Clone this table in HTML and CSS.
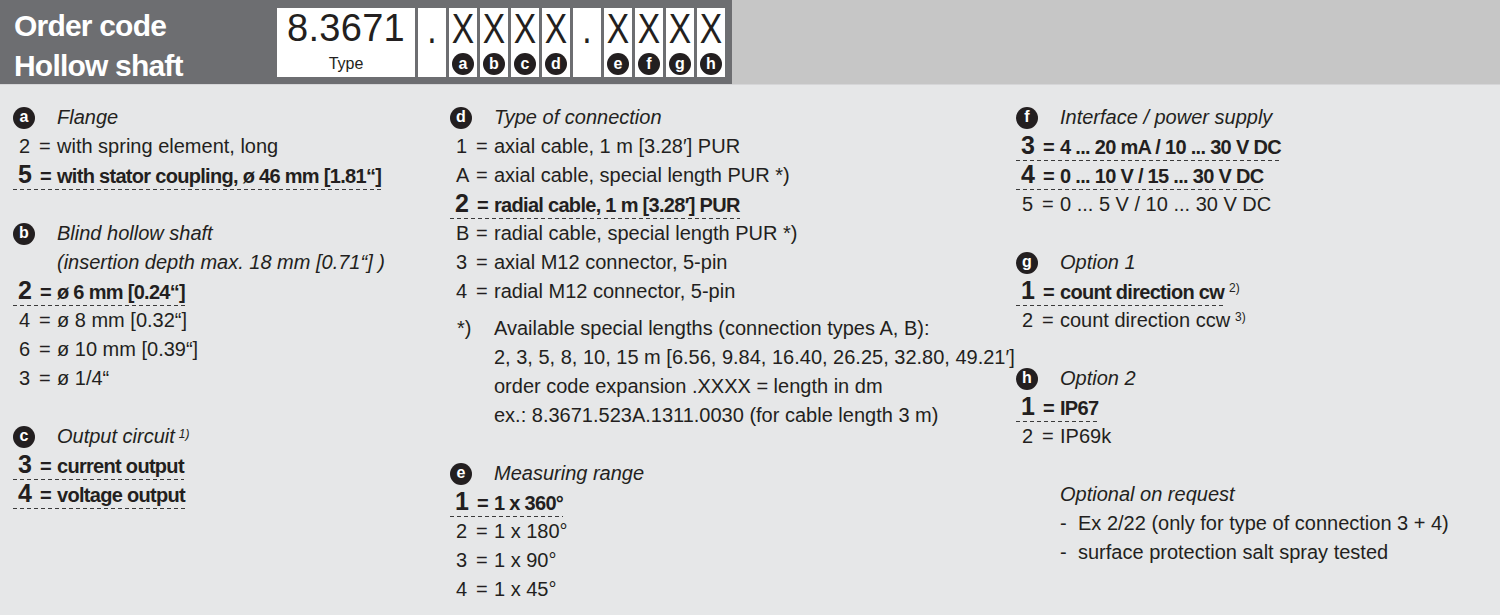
FILE: index.html
```html
<!DOCTYPE html>
<html lang="en">
<head>
<meta charset="utf-8">
<title>Order code – Hollow shaft</title>
<link rel="stylesheet" href="styles.css">
</head>
<body>
<div class="page">
  <header class="band">
    <div class="band-dark">
      <h1 class="title">Order code<br>Hollow shaft</h1>
      <div class="code">
        <div class="box type"><div class="type-num">8.3671</div><div class="type-label">Type</div></div>
        <div class="box slot"><span class="x">.</span></div>
        <div class="box slot"><span class="x">X</span><span class="badge">a</span></div>
        <div class="box slot"><span class="x">X</span><span class="badge">b</span></div>
        <div class="box slot"><span class="x">X</span><span class="badge">c</span></div>
        <div class="box slot"><span class="x">X</span><span class="badge">d</span></div>
        <div class="box slot"><span class="x">.</span></div>
        <div class="box slot"><span class="x">X</span><span class="badge">e</span></div>
        <div class="box slot"><span class="x">X</span><span class="badge">f</span></div>
        <div class="box slot"><span class="x">X</span><span class="badge">g</span></div>
        <div class="box slot"><span class="x">X</span><span class="badge">h</span></div>
      </div>
    </div>
    <div class="band-light"></div>
  </header>

  <main class="cols">
    <section class="col">
      <div class="group">
        <div class="head"><span class="badge">a</span><span class="head-text">Flange</span></div>
        <div class="row"><span class="n">2</span><span class="eq">=</span><span class="t">with spring element, long</span></div>
        <div class="row"><span class="std"><span class="n">5</span><span class="eq">=</span><span class="t">with stator coupling, ø 46 mm [1.81“]</span></span></div>
      </div>
      <div class="group">
        <div class="head"><span class="badge">b</span><span class="head-text">Blind hollow shaft</span></div>
        <div class="row cont"><span class="head-text">(insertion depth max. 18 mm [0.71“] )</span></div>
        <div class="row"><span class="std"><span class="n">2</span><span class="eq">=</span><span class="t">ø 6 mm [0.24“]</span></span></div>
        <div class="row"><span class="n">4</span><span class="eq">=</span><span class="t">ø 8 mm [0.32“]</span></div>
        <div class="row"><span class="n">6</span><span class="eq">=</span><span class="t">ø 10 mm [0.39“]</span></div>
        <div class="row"><span class="n">3</span><span class="eq">=</span><span class="t">ø 1/4“</span></div>
      </div>
      <div class="group">
        <div class="head"><span class="badge">c</span><span class="head-text">Output circuit</span><span class="fn it">1)</span></div>
        <div class="row"><span class="std"><span class="n">3</span><span class="eq">=</span><span class="t">current output</span></span></div>
        <div class="row"><span class="std"><span class="n">4</span><span class="eq">=</span><span class="t">voltage output</span></span></div>
      </div>
    </section>

    <section class="col">
      <div class="group">
        <div class="head"><span class="badge">d</span><span class="head-text">Type of connection</span></div>
        <div class="row"><span class="n">1</span><span class="eq">=</span><span class="t">axial cable, 1 m [3.28′] PUR</span></div>
        <div class="row"><span class="n">A</span><span class="eq">=</span><span class="t">axial cable, special length PUR *)</span></div>
        <div class="row"><span class="std"><span class="n">2</span><span class="eq">=</span><span class="t">radial cable, 1 m [3.28′] PUR</span></span></div>
        <div class="row"><span class="n">B</span><span class="eq">=</span><span class="t">radial cable, special length PUR *)</span></div>
        <div class="row"><span class="n">3</span><span class="eq">=</span><span class="t">axial M12 connector, 5-pin</span></div>
        <div class="row"><span class="n">4</span><span class="eq">=</span><span class="t">radial M12 connector, 5-pin</span></div>
        <div class="note">
          <span class="note-mark">*)</span>
          <div class="note-text">
            <div>Available special lengths (connection types A, B):</div>
            <div>2, 3, 5, 8, 10, 15 m [6.56, 9.84, 16.40, 26.25, 32.80, 49.21′]</div>
            <div>order code expansion .XXXX = length in dm</div>
            <div>ex.: 8.3671.523A.1311.0030 (for cable length 3 m)</div>
          </div>
        </div>
      </div>
      <div class="group">
        <div class="head"><span class="badge">e</span><span class="head-text">Measuring range</span></div>
        <div class="row"><span class="std"><span class="n">1</span><span class="eq">=</span><span class="t">1 x 360°</span></span></div>
        <div class="row"><span class="n">2</span><span class="eq">=</span><span class="t">1 x 180°</span></div>
        <div class="row"><span class="n">3</span><span class="eq">=</span><span class="t">1 x 90°</span></div>
        <div class="row"><span class="n">4</span><span class="eq">=</span><span class="t">1 x 45°</span></div>
      </div>
    </section>

    <section class="col">
      <div class="group">
        <div class="head"><span class="badge">f</span><span class="head-text">Interface / power supply</span></div>
        <div class="row"><span class="std"><span class="n">3</span><span class="eq">=</span><span class="t">4 ... 20 mA / 10 ... 30 V DC</span></span></div>
        <div class="row"><span class="std"><span class="n">4</span><span class="eq">=</span><span class="t">0 ... 10 V / 15 ... 30 V DC</span></span></div>
        <div class="row"><span class="n">5</span><span class="eq">=</span><span class="t">0 ... 5 V / 10 ... 30 V DC</span></div>
      </div>
      <div class="group">
        <div class="head"><span class="badge">g</span><span class="head-text">Option 1</span></div>
        <div class="row"><span class="std"><span class="n">1</span><span class="eq">=</span><span class="t">count direction cw</span></span><span class="fn">2)</span></div>
        <div class="row"><span class="n">2</span><span class="eq">=</span><span class="t">count direction ccw</span><span class="fn">3)</span></div>
      </div>
      <div class="group">
        <div class="head"><span class="badge">h</span><span class="head-text">Option 2</span></div>
        <div class="row"><span class="std"><span class="n">1</span><span class="eq">=</span><span class="t">IP67</span></span></div>
        <div class="row"><span class="n">2</span><span class="eq">=</span><span class="t">IP69k</span></div>
      </div>
      <div class="group optional">
        <div class="row cont"><span class="head-text">Optional on request</span></div>
        <div class="row cont"><span class="dash">-</span><span>Ex 2/22 (only for type of connection 3 + 4)</span></div>
        <div class="row cont"><span class="dash">-</span><span>surface protection salt spray tested</span></div>
      </div>
    </section>
  </main>
</div>
</body>
</html>
```
FILE: styles.css
```css
:root {
  --ink: #231f20;
  --sans: "Liberation Sans", Arial, sans-serif;
}

* { box-sizing: border-box; }

html, body {
  margin: 0;
  padding: 0;
}

body {
  background: #e6e7e8;
  color: var(--ink);
  font-family: var(--sans);
  font-size: 20px;
  width: 1500px;
  height: 615px;
  overflow: hidden;
}

/* ---------- header band ---------- */
.band {
  display: flex;
  height: 85px;
  border-bottom: 1px solid #d6d6d8;
}

.band-dark {
  width: 732px;
  background: #6d6e71;
  display: flex;
  padding: 8px 0 0 14px;
}

.band-light {
  flex: 1;
  background: #c6c6c6;
}

.title {
  margin: 0;
  width: 263px;
  margin-top: -2px;
  color: #fff;
  font-family: var(--sans);
  font-weight: bold;
  font-size: 30px;
  line-height: 40px;
  letter-spacing: -0.8px;
}

.code {
  display: flex;
  gap: 3px;
  height: 69px;
}

.box {
  background: #fff;
  height: 69px;
}

.type {
  width: 138px;
  text-align: center;
}

.type-num {
  font-size: 38px;
  line-height: 40px;
  letter-spacing: 0.3px;
}

.type-label {
  font-size: 16px;
  line-height: 20px;
  margin-top: 6px;
}

.slot {
  width: 28px;
  display: flex;
  flex-direction: column;
  align-items: center;
}

.x {
  font-size: 42px;
  line-height: 42px;
  height: 45px;
  transform: scaleX(0.8);
}

/* ---------- circled letters ---------- */
.badge {
  display: inline-flex;
  align-items: center;
  justify-content: center;
  width: 22px;
  height: 22px;
  border-radius: 50%;
  background: var(--ink);
  color: #fff;
  font-weight: bold;
  font-size: 16px;
  line-height: 1;
  padding-bottom: 1px;
  flex: none;
}

/* ---------- columns ---------- */
.cols {
  display: grid;
  grid-template-columns: 437px 566px 1fr;
  padding: 18px 0 0 13px;
}

.group + .group {
  margin-top: 29px;
}

.head {
  display: flex;
  align-items: center;
  height: 29px;
}

.head .badge {
  margin-right: 22px;
}

.head-text {
  font-style: italic;
  font-size: 20px;
}

.row {
  display: flex;
  align-items: flex-start;
  height: 29px;
  line-height: 29px;
  white-space: nowrap;
}

.row.cont {
  padding-left: 44px;
}

.n {
  width: 26px;
  padding-left: 6px;
  flex: none;
}

.eq {
  width: 18px;
  flex: none;
}

/* standard (bold, dashed underline) rows */
.std {
  display: inline-flex;
  align-items: baseline;
  line-height: 26px;
  font-weight: bold;
  font-size: 20px;
  letter-spacing: -0.7px;
  padding-bottom: 1px;
  background: repeating-linear-gradient(to right, #3a3a3a 0 4px, transparent 4px 7px) left bottom / 100% 1px no-repeat;
}

.std .n {
  font-size: 25px;
  padding-left: 5px;
  letter-spacing: 0;
}

.std .eq {
  padding-left: 1px;
}

/* footnote markers */
.fn {
  font-size: 12px;
  line-height: 12px;
  margin-left: 5px;
  margin-top: 5px;
  align-self: flex-start;
}

.head .fn {
  margin-top: -6px;
  margin-left: 4px;
  align-self: center;
}

.fn.it {
  font-style: italic;
}

/* note */
.note {
  display: flex;
  margin-top: 8px;
  line-height: 29px;
  white-space: nowrap;
}

.note-mark {
  width: 44px;
  padding-left: 7px;
  flex: none;
}

.dash {
  width: 18px;
  flex: none;
}
```
